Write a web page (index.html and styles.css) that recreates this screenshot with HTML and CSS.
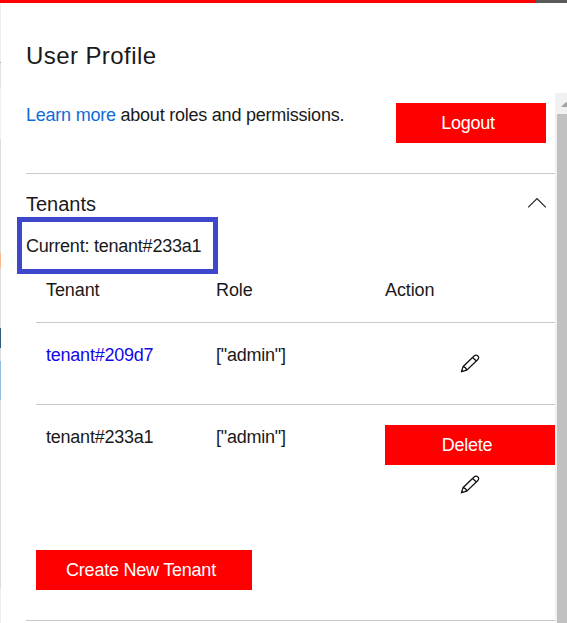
FILE: index.html
```html
<!DOCTYPE html>
<html lang="en">
<head>
<meta charset="utf-8">
<title>User Profile</title>
<link rel="stylesheet" href="styles.css">
</head>
<body>
<div class="topbar"><div class="topbar-fill"></div></div>
<div class="shell">
  <div class="backdrop"></div>
  <div class="panel">
    <h1 class="title">User Profile</h1>
    <div class="scroll">
      <main class="content">
        <section class="intro">
          <p class="intro-text"><a class="link">Learn more</a> about roles and permissions.</p>
          <button class="btn logout">Logout</button>
        </section>
        <section class="tenants">
          <div class="section-head">
            <h2>Tenants</h2>
            <svg class="chevron" width="20" height="12" viewBox="0 0 20 12"><path d="M1.2 10.3 10 1.5l8.8 8.8" fill="none" stroke="#222" stroke-width="1.2"/></svg>
          </div>
          <div class="current">Current: tenant#233a1</div>
          <div class="table">
            <div class="row head"><span>Tenant</span><span>Role</span><span>Action</span></div>
            <div class="row">
              <a class="tenant-link">tenant#209d7</a><span>["admin"]</span>
              <div class="actions first">
                <svg class="pencil" width="20" height="20" viewBox="0 0 20 20"><path d="M1.6 17.6 3 12.7 13.8 2.3C15.2 1 16.8 1 17.9 2s1.1 2.5-.3 3.8L6.7 16.2zM3 12.7c1.9.2 3.2 1.5 3.7 3.5M12.6 3.5l3.8 3.5" fill="none" stroke="#111" stroke-width="1.25"/><path d="M1 18.2l.7-2.7 2 2z" fill="#111"/></svg>
              </div>
            </div>
            <div class="row last">
              <span>tenant#233a1</span><span>["admin"]</span>
              <div class="actions">
                <button class="btn delete">Delete</button>
                <svg class="pencil" width="20" height="20" viewBox="0 0 20 20"><path d="M1.6 17.6 3 12.7 13.8 2.3C15.2 1 16.8 1 17.9 2s1.1 2.5-.3 3.8L6.7 16.2zM3 12.7c1.9.2 3.2 1.5 3.7 3.5M12.6 3.5l3.8 3.5" fill="none" stroke="#111" stroke-width="1.25"/><path d="M1 18.2l.7-2.7 2 2z" fill="#111"/></svg>
              </div>
            </div>
          </div>
          <button class="btn create">Create New Tenant</button>
        </section>
      </main>
      <div class="scrollbar">
        <svg class="arrow" width="10" height="5" viewBox="0 0 10 5"><path d="M0 5 5 0l5 5z" fill="#a3a3a3"/></svg>
        <div class="thumb"></div>
      </div>
    </div>
  </div>
</div>
</body>
</html>
```
FILE: styles.css
```css
* { box-sizing: border-box; margin: 0; padding: 0; }
body {
  height: 623px;
  overflow: hidden;
  background: #fff;
  color: #1a1a1a;
  font: 18px/22px "Liberation Sans", Arial, sans-serif;
  letter-spacing: -0.23px;
}
.topbar { height: 3px; background: #5a5a5a; }
.topbar-fill { width: 536px; height: 3px; background: #f00; }
.shell { display: flex; height: 620px; }
.backdrop {
  width: 1px;
  background: linear-gradient(#eee 0 59px, #b5b5b5 59px 60px, #e2e2e2 60px 85px, #f0f0f0 85px 136px, #ddd 136px 250px, #f9b98d 250px 265px, #ddd 265px 325px, #2d5a80 325px 345px, #ddd 345px 358px, #8fbfe0 358px 397px, #ddd 397px 585px, #eee 585px);
}
.panel { flex: 1; min-width: 0; }
.title {
  height: 90px;
  padding: 39px 0 0 25px;
  font-size: 24px;
  line-height: 28px;
  font-weight: 400;
  letter-spacing: 0.42px;
}
.scroll { display: flex; height: 530px; }
.content { width: 554px; padding-left: 25px; }
.intro {
  display: flex;
  justify-content: space-between;
  height: 81px;
  padding: 10px 9px 0 0;
  border-bottom: 1px solid #c8c8c8;
}
.intro-text { padding-top: 1px; white-space: nowrap; }
.link { color: #0f6cda; }
.btn {
  height: 40px;
  border: 0;
  background: #f00;
  color: #fff;
  font: 18px/40px "Liberation Sans", Arial, sans-serif;
  letter-spacing: -0.23px;
  text-align: center;
}
.logout { width: 150px; padding-right: 6px; }
.tenants { height: 447px; border-bottom: 1px solid #c8c8c8; }
.section-head {
  display: flex;
  justify-content: space-between;
  height: 43px;
  padding: 18px 8px 0 0;
}
.section-head h2 { font-size: 20px; line-height: 24px; font-weight: 400; letter-spacing: 0; }
.chevron { margin-top: 5px; }
.current {
  width: 201px;
  height: 57px;
  margin-left: -9px;
  padding: 13px 0 0 4px;
  border: 5px solid #3f48cc;
  white-space: nowrap;
}
.table { margin-left: 10px; }
.row {
  display: grid;
  grid-template-columns: 170px 169px 170px;
  height: 82px;
  padding-top: 21px;
  padding-left: 10px;
  border-bottom: 1px solid #c8c8c8;
}
.row.head { height: 49px; padding-top: 5px; letter-spacing: -0.1px; }
.row.last { height: 145px; padding-top: 20px; border: 0; }
.row.last > span { padding-top: 1px; }
.tenant-link { color: #1208e8; }
.actions { display: flex; flex-direction: column; align-items: center; }
.actions.first { padding-top: 10px; }
.delete { width: 170px; padding-right: 6px; }
.delete + .pencil { margin-top: 10px; }
.create { display: block; width: 216px; margin-left: 10px; padding-right: 6px; }
.scrollbar { width: 12px; background: #f1f1f1; overflow: hidden; }
.arrow { display: block; margin: 9px 0 7px 6px; }
.thumb { width: 10px; height: 509px; margin-left: 2px; background: #c1c1c1; }
```
